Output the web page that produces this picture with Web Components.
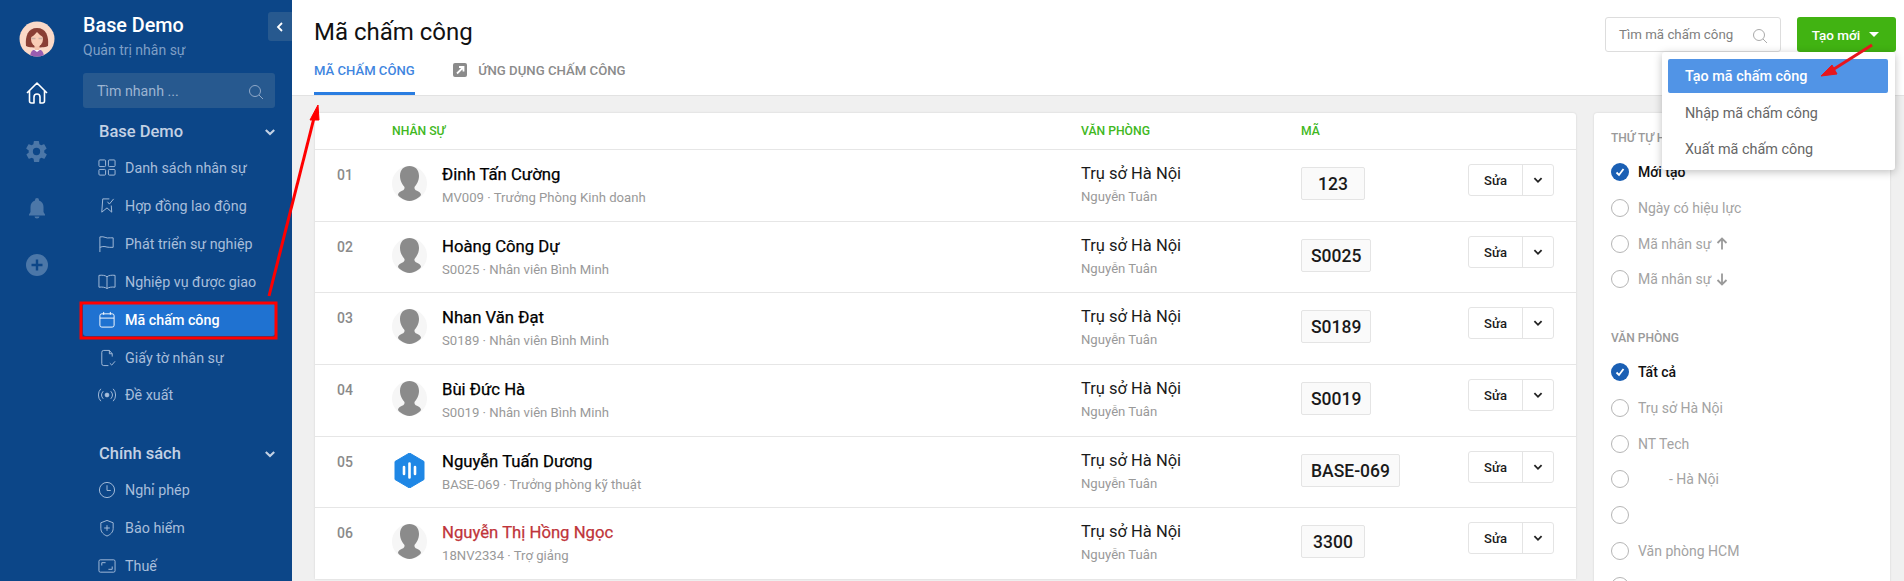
<!DOCTYPE html>
<html lang="vi">
<head>
<meta charset="utf-8">
<title>Mã chấm công</title>
<style>
  html, body { margin: 0; height: 581px; overflow: hidden; }
  body { font-family: Roboto, "Noto Sans", sans-serif; background: #f0f0f0; }
</style>
</head>
<body>
<app-shell>
  <icon-rail slot="rail"></icon-rail>
  <side-panel slot="panel">
    <side-section title="Base Demo">
      <side-item icon="grid">Danh sách nhân sự</side-item>
      <side-item icon="contract">Hợp đồng lao động</side-item>
      <side-item icon="flag">Phát triển sự nghiệp</side-item>
      <side-item icon="book">Nghiệp vụ được giao</side-item>
      <side-item icon="calendar" active>Mã chấm công</side-item>
      <side-item icon="doc">Giấy tờ nhân sự</side-item>
      <side-item icon="signal">Đề xuất</side-item>
    </side-section>
    <side-section title="Chính sách" class="second">
      <side-item icon="clock">Nghỉ phép</side-item>
      <side-item icon="shield">Bảo hiểm</side-item>
      <side-item icon="tax">Thuế</side-item>
    </side-section>
  </side-panel>
  <page-header slot="header"></page-header>
  <staff-table slot="table">
    <staff-row num="01" name="Đinh Tấn Cường" sub="MV009 · Trưởng Phòng Kinh doanh" code="123"></staff-row>
    <staff-row num="02" name="Hoàng Công Dự" sub="S0025 · Nhân viên Bình Minh" code="S0025"></staff-row>
    <staff-row num="03" name="Nhan Văn Đạt" sub="S0189 · Nhân viên Bình Minh" code="S0189"></staff-row>
    <staff-row num="04" name="Bùi Đức Hà" sub="S0019 · Nhân viên Bình Minh" code="S0019"></staff-row>
    <staff-row num="05" name="Nguyễn Tuấn Dương" sub="BASE-069 · Trưởng phòng kỹ thuật" code="BASE-069" logo></staff-row>
    <staff-row num="06" name="Nguyễn Thị Hồng Ngọc" sub="18NV2334 · Trợ giảng" code="3300" alert></staff-row>
  </staff-table>
  <filter-panel slot="filters">
    <filter-group title="THỨ TỰ HIỂN THỊ">
      <filter-option checked>Mới tạo</filter-option>
      <filter-option>Ngày có hiệu lực</filter-option>
      <filter-option arrow="up">Mã nhân sự</filter-option>
      <filter-option arrow="down">Mã nhân sự</filter-option>
    </filter-group>
    <filter-group title="VĂN PHÒNG" class="second">
      <filter-option checked>Tất cả</filter-option>
      <filter-option>Trụ sở Hà Nội</filter-option>
      <filter-option>NT Tech</filter-option>
      <filter-option indent>- Hà Nội</filter-option>
      <filter-option></filter-option>
      <filter-option>Văn phòng HCM</filter-option>
      <filter-option></filter-option>
    </filter-group>
  </filter-panel>
</app-shell>
<create-menu></create-menu>
<guide-marks></guide-marks>

<script>
const sideIcons = {
  grid: '<rect x="1" y="1" width="7" height="7" rx="1"/><rect x="11" y="1" width="7" height="7" rx="1"/><rect x="1" y="11" width="7" height="6" rx="1"/><rect x="11" y="11" width="7" height="6" rx="1"/>',
  contract: '<path d="M12 2H5L4 16l5.500-4.500L14.500 16 14 9M10 5l2 2.500L16.500 2"/>',
  flag: '<path d="M2 18V2c5-1 6 2 11 1h3v10h-4c-4 0-5-2-10 0"/>',
  book: '<path d="M9.500 4C8 2.500 4 2 1 2.500V15c3-.5 7 0 8.500 1.500C11 15 15 14.500 18 15V2.500C15 2 11 2.500 9.500 4zM9.500 4v12"/>',
  calendar: '<rect x="2" y="3" width="15" height="14" rx="2"/><path d="M2 7.500h15M6 1v3M13 1v3"/>',
  doc: '<path d="M12 1.500H6a2 2 0 0 0-2 2v12a2 2 0 0 0 2 2h5M12 1.500 15 5v3M12 1.500V5h3M12.500 15l2 2 3.500-4"/>',
  signal: '<circle cx="9.500" cy="9.500" r="2" fill="currentColor"/><path d="M5.500 5.500a6 6 0 0 0 0 8M13.500 5.500a6 6 0 0 1 0 8M3 3a9.500 9.500 0 0 0 0 13M16 3a9.500 9.500 0 0 1 0 13"/>',
  clock: '<circle cx="9.500" cy="9.500" r="8"/><path d="M9.500 4.500v5.500h4"/>',
  shield: '<path d="M9.500 1.500 16 4v6c0 4-3 6.500-6.500 8C6 16.500 3 14 3 10V4zM9.500 6.500v6M6.500 9.500h6"/>',
  tax: '<rect x="1" y="3" width="17" height="13" rx="1.500"/><path d="M4 9V6h4M15 10v3h-4"/>'
};

const searchIcon = c => `<svg width="16" height="16" viewBox="0 0 16 16" fill="none" stroke="${c}" stroke-width="1"><circle cx="7" cy="7" r="5.500"/><path d="m11 11 4 4"/></svg>`;
const chevron = (c, w) => `<svg width="${w}" height="${w}" viewBox="0 0 10 10" fill="none" stroke="${c}" stroke-width="1.500"><path d="m2 3.500 3 3 3-3"/></svg>`;

class AppShell extends HTMLElement {
  constructor() {
    super();
    this.attachShadow({ mode: 'open' }).innerHTML = `
      <style>
        :host { display: flex; height: 581px; overflow: hidden; }
        .side { display: flex; width: 292px; flex: none; background: #0c4688; }
        .main { flex: 1; min-width: 0; display: flex; flex-direction: column; }
        .body { display: flex; align-items: flex-start; padding: 17px 14px 0 23px; gap: 18px; border-top: 1px solid #e2e2e2; }
      </style>
      <div class="side"><slot name="rail"></slot><slot name="panel"></slot></div>
      <div class="main">
        <slot name="header"></slot>
        <div class="body"><slot name="table"></slot><slot name="filters"></slot></div>
      </div>`;
  }
}

class IconRail extends HTMLElement {
  constructor() {
    super();
    this.attachShadow({ mode: 'open' }).innerHTML = `
      <style>
        :host { display: flex; flex-direction: column; align-items: center; width: 73px; flex: none; padding-top: 21px; box-sizing: border-box; }
        svg { display: block; flex: none; }
        .home { margin-top: 25px; }
        .gear { margin-top: 35px; }
        .bell { margin-top: 33px; }
        .plus { margin-top: 35px; }
      </style>
      <svg width="36" height="36" viewBox="0 0 36 36">
        <defs><clipPath id="a"><circle cx="18" cy="18" r="17.500"/></clipPath></defs>
        <circle cx="18" cy="18" r="17.500" fill="#fbd9c8"/>
        <g clip-path="url(#a)">
          <path d="M7 25c-1-10 2-18 11-18s12 8 11 18c-3 2-19 2-22 0z" fill="#8a3f35"/>
          <path d="M11 37c0-7 3-9 7-9s7 2 7 9z" fill="#9a5db0"/>
          <path d="M14 28l4 3 4-3z" fill="#fff"/>
          <rect x="15.500" y="22" width="5" height="7" fill="#f5c4ac"/>
          <ellipse cx="18" cy="18" rx="6" ry="7.500" fill="#f9cdb6"/>
          <path d="M12 16c3-1 5-4 6-5 2 2 4 4 6 5 0-5-2-7-6-7s-6 3-6 7z" fill="#8a3f35"/>
          <path d="M12.500 17.500h4M19.500 17.500h4" stroke="#c9b0a5" stroke-width="1.500"/>
        </g>
      </svg>
      <svg class="home" width="22" height="22" viewBox="0 0 22 22" fill="none" stroke="#fff" stroke-width="1.600" stroke-linejoin="round">
        <path d="M1 11 11 1l10 10M3.500 9v10a2 2 0 0 0 2 2H8v-6a3 3 0 0 1 6 0v6h2.500a2 2 0 0 0 2-2V9"/>
      </svg>
      <svg class="gear" width="25" height="25" viewBox="0 0 24 24" fill="#4c77a8">
        <path d="M19.400 13c.1-.3.100-.7.100-1s0-.7-.1-1l2.100-1.600c.2-.2.200-.4.100-.6l-2-3.500c-.1-.2-.4-.3-.6-.2l-2.500 1c-.5-.4-1.100-.7-1.700-1l-.4-2.600c0-.3-.2-.5-.5-.5h-4c-.3 0-.5.200-.5.500l-.4 2.600c-.6.300-1.200.6-1.700 1l-2.500-1c-.2-.1-.5 0-.6.200l-2 3.500c-.1.200-.1.400.1.600L4.600 11c-.1.300-.1.700-.1 1s0 .7.100 1l-2.100 1.600c-.2.200-.2.400-.1.600l2 3.500c.1.200.4.300.6.200l2.500-1c.5.400 1.100.7 1.700 1l.4 2.600c0 .3.200.5.500.5h4c.3 0 .5-.2.500-.5l.4-2.600c.6-.3 1.200-.6 1.700-1l2.500 1c.2.100.5 0 .6-.2l2-3.500c.1-.2.100-.4-.1-.6zM12 15.500a3.500 3.500 0 1 1 0-7 3.500 3.500 0 0 1 0 7z"/>
      </svg>
      <svg class="bell" width="22" height="22" viewBox="0 0 22 22" fill="#4c77a8">
        <path d="M11 1a2 2 0 0 0-2 2v.500C6 4.500 4.500 7 4.500 10v5L3 17.500v1h16v-1L17.500 15v-5c0-3-1.500-5.500-4.500-6.500V3a2 2 0 0 0-2-2zM8.500 19.500a2.500 2 0 0 0 5 0z"/>
      </svg>
      <svg class="plus" width="22" height="22" viewBox="0 0 22 22">
        <circle cx="11" cy="11" r="11" fill="#4c77a8"/>
        <path d="M11 5.500v11M5.500 11h11" stroke="#0c4688" stroke-width="2.400"/>
      </svg>`;
  }
}

class SidePanel extends HTMLElement {
  constructor() {
    super();
    this.attachShadow({ mode: 'open' }).innerHTML = `
      <style>
        :host { display: block; flex: 1; padding: 0 17px 0 10px; position: relative; }
        .brand { padding-top: 14px; height: 59px; }
        h1 { margin: 0; font: 500 19.800px/24px Roboto, sans-serif; color: #fff; }
        p { margin: 2px 0 0; font: 400 14px/20px Roboto, sans-serif; color: #7f9fc6; }
        .find { display: flex; align-items: center; justify-content: space-between; height: 35px; padding: 0 11px 0 14px; background: #27598f; border-radius: 3px; font: 400 14.200px Roboto, sans-serif; color: #9db4d1; }
        .find svg { display: block; margin-top: 2px; }
        .toggle { position: absolute; top: 12px; right: 0; width: 24px; height: 29px; background: #27598f; border-radius: 3px 0 0 3px; display: flex; align-items: center; justify-content: center; }
      </style>
      <div class="brand"><h1>Base Demo</h1><p>Quản trị nhân sự</p></div>
      <div class="find"><span>Tìm nhanh ...</span>${searchIcon('#8fa8c8')}</div>
      <div class="toggle"><svg width="8" height="10" viewBox="0 0 8 10" fill="none" stroke="#fff" stroke-width="1.800"><path d="M6 1 2 5l4 4"/></svg></div>
      <slot></slot>`;
  }
}

class SideSection extends HTMLElement {
  constructor() {
    super();
    this.attachShadow({ mode: 'open' }).innerHTML = `
      <style>
        :host { display: block; }
        :host(.second) { margin-top: 18px; }
        .head { display: flex; align-items: center; justify-content: space-between; height: 20px; padding: 14px 0 5px 16px; margin-right: -2px; font: 500 16.500px/20px Roboto, sans-serif; color: #c3d1e4; }
        svg { display: block; }
      </style>
      <div class="head"><span></span>${chevron('#c3d1e4', 14)}</div>
      <slot></slot>`;
    this.shadowRoot.querySelector('span').textContent = this.getAttribute('title');
  }
}

class SideItem extends HTMLElement {
  constructor() {
    super();
    this.attachShadow({ mode: 'open' }).innerHTML = `
      <style>
        :host { display: flex; align-items: center; height: 33px; margin: 4.850px 0 0; padding-left: 15px; gap: 9px; font: 400 14.300px Roboto, sans-serif; color: #a8bedb; border-radius: 3px; }
        :host([active]) { background: #1f72d1; color: #fff; font-weight: 500; }
        svg { display: block; flex: none; }
      </style>
      <svg width="18" height="18" viewBox="0 0 19 19" fill="none" stroke="currentColor" stroke-width="1"></svg>
      <span><slot></slot></span>`;
    this.shadowRoot.querySelector('svg').innerHTML = sideIcons[this.getAttribute('icon')] || '';
  }
}

class PageHeader extends HTMLElement {
  constructor() {
    super();
    this.attachShadow({ mode: 'open' }).innerHTML = `
      <style>
        :host { display: flex; justify-content: space-between; height: 95px; padding: 0 8px 0 22px; background: #fff; box-sizing: border-box; }
        h2 { margin: 0; padding-top: 17px; font: 400 24px/30px Roboto, sans-serif; color: #111; }
        nav { display: flex; gap: 38.500px; margin-top: 12px; height: 36px; font: 500 13.100px/23px Roboto, sans-serif; }
        a { display: flex; align-items: flex-start; gap: 11px; }
        a.on { color: #3f86e0; box-shadow: inset 0 -3px #2a7de1; }
        a.off { color: #8b8b8b; font-size: 13.200px; }
        a svg { display: block; margin-top: 4px; }
        .tools { display: flex; gap: 16px; padding-top: 17px; align-items: flex-start; }
        .find { display: flex; align-items: center; justify-content: space-between; width: 176px; height: 35px; box-sizing: border-box; padding: 0 12px 0 13px; border: 1px solid #ddd; border-radius: 3px; font: 400 13.300px Roboto, sans-serif; color: #808080; }
        .find svg { margin-top: 3px; display: block; }
        .add { display: flex; align-items: center; justify-content: center; gap: 9px; width: 99px; height: 35px; padding-right: 2px; box-sizing: border-box; background: #41b312; border-radius: 3px; color: #fff; font: 500 13.500px Roboto, sans-serif; }
        .tri { width: 0; height: 0; border: 5px solid transparent; border-top: 5px solid #fff; border-bottom: 0; }
      </style>
      <div>
        <h2>Mã chấm công</h2>
        <nav>
          <a class="on">MÃ CHẤM CÔNG</a>
          <a class="off">
            <svg width="14" height="14" viewBox="0 0 14 14"><rect width="14" height="14" rx="2" fill="#8b8b8b"/><path d="M4 10.500 9.500 5M6 4h4.500v4.500" fill="none" stroke="#fff" stroke-width="1.800"/></svg>
            ỨNG DỤNG CHẤM CÔNG
          </a>
        </nav>
      </div>
      <div class="tools">
        <div class="find"><span>Tìm mã chấm công</span>${searchIcon('#aaa')}</div>
        <div class="add"><span>Tạo mới</span><i class="tri"></i></div>
      </div>`;
  }
}

class StaffTable extends HTMLElement {
  constructor() {
    super();
    this.attachShadow({ mode: 'open' }).innerHTML = `
      <style>
        :host { display: block; width: 1261px; flex: none; background: #fff; border-radius: 3px 3px 0 0; box-shadow: 0 0 2px rgba(0,0,0,.15); }
        .head { display: grid; grid-template-columns: 55px 689px 220px 1fr; height: 36px; padding-left: 22px; align-items: center; font: 500 12.200px Roboto, sans-serif; color: #41b81e; }
      </style>
      <div class="head"><span></span><span>NHÂN SỰ</span><span>VĂN PHÒNG</span><span>MÃ</span></div>
      <slot></slot>`;
  }
}

class StaffRow extends HTMLElement {
  constructor() {
    super();
    const a = n => this.getAttribute(n) || '';
    const logo = `<svg width="35" height="35" viewBox="0 0 35 35">
        <path d="M17.500 0 32 8.500v18L17.500 35 3 26.500v-18z" fill="#1f87e5" stroke="#1f87e5" stroke-linejoin="round"/>
        <path d="M12 14v7M17.500 10.500v14M23 14v7" stroke="#fff" stroke-width="2.600" stroke-linecap="round"/>
      </svg>`;
    const person = `<svg width="35" height="35" viewBox="0 0 35 35">
        <circle cx="17.500" cy="17.500" r="17.500" fill="#f6f6f6"/>
        <path d="M17.500 0c5.500 0 9.500 3.500 9.500 10 0 5-2.500 8.500-4.500 11-.3 2 .5 3 2.500 3.800 2 .8 3.500 1.700 4 3.700 0 1-1 2-2.500 3-3 2-6 3.500-9 3.500s-6-1.500-9-3.500c-1.500-1-2.500-2-2.500-3 .5-2 2-2.900 4-3.700 2-.8 2.800-1.800 2.500-3.800-2-2.500-4.500-6-4.500-11 0-6.500 4-10 9.500-10z" fill="#8b8b8b"/>
      </svg>`;
    this.attachShadow({ mode: 'open' }).innerHTML = `
      <style>
        :host { display: block; border-top: 1px solid #e6e6e6; height: 71.670px; box-sizing: border-box; }
        .row { display: grid; grid-template-columns: 55px 689px 220px 167px 86px; padding-left: 22px; }
        .num { font: 500 14px/20px Roboto, sans-serif; color: #8a8a8a; padding-top: 15px; }
        .who { display: flex; gap: 15px; padding-top: 16px; }
        .who svg { display: block; flex: none; }
        .name { font: 400 16.700px/20px Roboto, sans-serif; -webkit-text-stroke: .25px currentColor; color: ${this.hasAttribute('alert') ? '#c0343a' : '#000'}; margin-top: -1px; }
        .sub { font: 400 13.150px/18px Roboto, sans-serif; color: #999; margin-top: 4px; }
        .office { padding-top: 14px; font: 400 16.500px/20px Roboto, sans-serif; color: #1a1a1a; }
        .office div { font-size: 13.150px; line-height: 18px; color: #999; margin-top: 4px; }
        .code { padding-top: 17px; }
        .code span { display: inline-block; height: 33px; padding: 0 9px; min-width: 64px; text-align: center; box-sizing: border-box; background: #fafafa; border: 1px solid #e4e4e4; border-radius: 2px; font: 500 17.500px/32px Roboto, sans-serif; color: #1a1a1a; }
        .act { padding-top: 14px; }
        .btn { display: flex; height: 32px; box-sizing: border-box; border: 1px solid #e4e4e4; border-radius: 3px; font: 500 13px/32px Roboto, sans-serif; color: #1a1a1a; }
        .btn b { width: 53px; text-align: center; font-weight: 500; border-right: 1px solid #e4e4e4; }
        .btn i { flex: 1; display: flex; align-items: center; justify-content: center; }
      </style>
      <div class="row">
        <div class="num">${a('num')}</div>
        <div class="who">
          ${this.hasAttribute('logo') ? logo : person}
          <div><div class="name">${a('name')}</div><div class="sub">${a('sub')}</div></div>
        </div>
        <div class="office">Trụ sở Hà Nội<div>Nguyễn Tuân</div></div>
        <div class="code"><span>${a('code')}</span></div>
        <div class="act"><div class="btn"><b>Sửa</b><i>${chevron('#222', 12)}</i></div></div>
      </div>`;
  }
}

class FilterPanel extends HTMLElement {
  constructor() {
    super();
    this.attachShadow({ mode: 'open' }).innerHTML = `
      <style>
        :host { display: block; width: 296px; flex: none; padding: 16px 17px 0; box-sizing: border-box; background: #fff; box-shadow: 0 0 2px rgba(0,0,0,.15); border-radius: 3px 3px 0 0; height: 500px; }
      </style>
      <slot></slot>`;
  }
}

class FilterGroup extends HTMLElement {
  constructor() {
    super();
    this.attachShadow({ mode: 'open' }).innerHTML = `
      <style>
        :host { display: block; }
        :host(.second) { margin-top: 31.600px; }
        h3 { margin: 0 0 7.500px; font: 500 12px/18px Roboto, sans-serif; color: #9a9a9a; }
      </style>
      <h3></h3><slot></slot>`;
    this.shadowRoot.querySelector('h3').textContent = this.getAttribute('title');
  }
}

class FilterOption extends HTMLElement {
  constructor() {
    super();
    const on = this.hasAttribute('checked');
    const arrow = this.getAttribute('arrow');
    const arrowSvg = arrow ? `<svg width="12" height="13" viewBox="0 0 12 13" fill="none" stroke="#9a9a9a" stroke-width="1.800" ${arrow === 'down' ? 'style="transform:rotate(180deg)"' : ''}><path d="M6 12.500V1.500M1.500 6 6 1.500 10.500 6"/></svg>` : '';
    this.attachShadow({ mode: 'open' }).innerHTML = `
      <style>
        :host { display: flex; align-items: center; height: 35.700px; gap: 9px; font: 400 14px Roboto, sans-serif; color: ${on ? '#111' : '#a3a3a3'}; ${on ? 'font-weight: 500;' : ''} }
        :host([indent]) .text { padding-left: 31px; }
        .text { display: flex; align-items: center; gap: 5px; }
        .dot { display: block; flex: none; }
      </style>
      <svg class="dot" width="18" height="18" viewBox="0 0 18 18">
        ${on ? '<circle cx="9" cy="9" r="9" fill="#1a5fb4"/><path d="m5.500 9.500 2.500 2.500 4.500-6" fill="none" stroke="#fff" stroke-width="1.800"/>' : '<circle cx="9" cy="9" r="8.500" fill="#fff" stroke="#b5b5b5"/>'}
      </svg>
      <span class="text"><span><slot></slot></span>${arrowSvg}</span>`;
  }
}

class CreateMenu extends HTMLElement {
  constructor() {
    super();
    this.attachShadow({ mode: 'open' }).innerHTML = `
      <style>
        :host { display: block; position: absolute; left: 1662px; top: 52px; width: 233px; height: 118px; padding: 7px 7px 0 6px; box-sizing: border-box; background: #fff; border-radius: 3px; box-shadow: 0 2px 8px rgba(0,0,0,.25); font: 400 14.400px Roboto, sans-serif; color: #666; }
        div { height: 36px; line-height: 38px; padding-left: 17px; border-radius: 2px; }
        .on { height: 34px; line-height: 36px; background: #5194e6; color: #fff; font-weight: 500; margin-bottom: 2px; }
      </style>
      <div class="on">Tạo mã chấm công</div>
      <div>Nhập mã chấm công</div>
      <div>Xuất mã chấm công</div>`;
  }
}

class GuideMarks extends HTMLElement {
  constructor() {
    super();
    this.attachShadow({ mode: 'open' }).innerHTML = `
      <style>
        :host { display: block; position: absolute; left: 0; top: 0; width: 1904px; height: 581px; pointer-events: none; }
        svg { display: block; }
      </style>
      <svg width="1904" height="581" viewBox="0 0 1904 581">
        <rect x="81" y="303" width="195" height="35" fill="none" stroke="#f00" stroke-width="3"/>
        <path d="M269 296 314 118" stroke="#f00" stroke-width="3" fill="none"/>
        <path d="M318 105 310 120 319 120z" fill="#f00" stroke="#f00"/>
        <path d="M1872 45 1834 69" stroke="#e8161c" stroke-width="3" fill="none"/>
        <path d="M1821 76 1837 74 1832 65z" fill="#e8161c" stroke="#e8161c"/>
      </svg>`;
  }
}

customElements.define('app-shell', AppShell);
customElements.define('icon-rail', IconRail);
customElements.define('side-panel', SidePanel);
customElements.define('side-section', SideSection);
customElements.define('side-item', SideItem);
customElements.define('page-header', PageHeader);
customElements.define('staff-table', StaffTable);
customElements.define('staff-row', StaffRow);
customElements.define('filter-panel', FilterPanel);
customElements.define('filter-group', FilterGroup);
customElements.define('filter-option', FilterOption);
customElements.define('create-menu', CreateMenu);
customElements.define('guide-marks', GuideMarks);
</script>
</body>
</html>
